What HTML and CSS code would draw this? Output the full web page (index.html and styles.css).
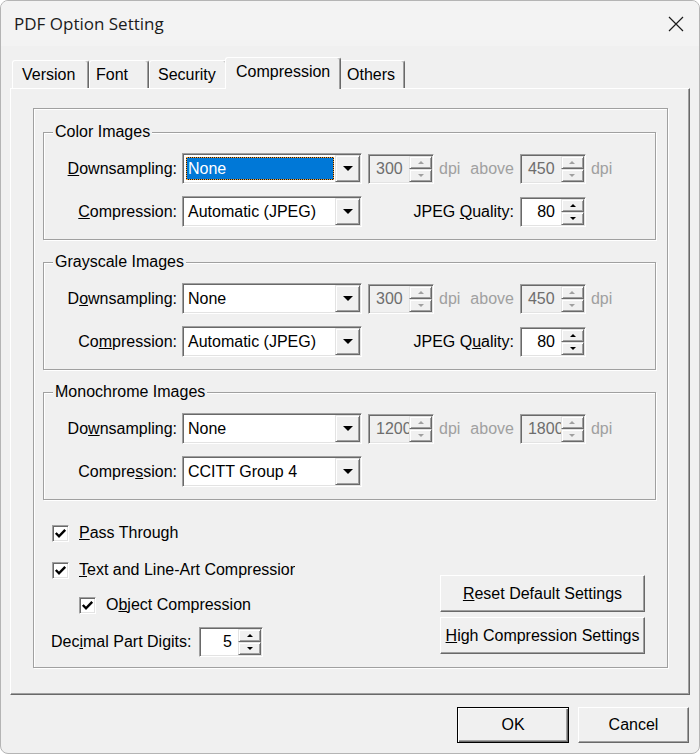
FILE: index.html
```html
<!DOCTYPE html>
<html>
<head>
	<meta charset="UTF-8">
	<title>PDF Option Setting</title>
	<link rel="stylesheet" href="styles.css">
</head>
<body>

	<div class="window">

		<div class="titlebar">
			<span class="title">PDF Option Setting</span>
			<svg class="close" width="16" height="16" viewBox="0 0 16 16">
				<path d="M1 1 L15 15 M15 1 L1 15" stroke="#1b1b1b" stroke-width="1.2" fill="none"/>
			</svg>
		</div>

		<div class="tabs">
			<div class="tab tab-version">Version</div>
			<div class="tab tab-font">Font</div>
			<div class="tab tab-security">Security</div>
			<div class="tab tab-compression active">Compression</div>
			<div class="tab tab-others">Others</div>
		</div>

		<div class="panel">
			<div class="frame">

				<fieldset class="group">
					<legend>Color Images</legend>
					<div class="row">
						<label class="lbl"><u>D</u>ownsampling:</label>
						<div class="combo sunken">
							<div class="combo-text"><span class="sel">None</span></div>
							<div class="drop"><i class="tri"></i></div>
						</div>
						<div class="spin sunken off res">
							<span class="spin-val">300</span>
							<span class="spin-btns"><span class="spin-btn"><i class="up"></i></span><span class="spin-btn"><i class="down"></i></span></span>
						</div>
						<span class="dim dpi">dpi</span>
						<span class="dim above">above</span>
						<div class="spin sunken off">
							<span class="spin-val">450</span>
							<span class="spin-btns"><span class="spin-btn"><i class="up"></i></span><span class="spin-btn"><i class="down"></i></span></span>
						</div>
						<span class="dim dpi">dpi</span>
					</div>
					<div class="row">
						<label class="lbl"><u>C</u>ompression:</label>
						<div class="combo sunken">
							<div class="combo-text"><span class="val">Automatic (JPEG)</span></div>
							<div class="drop"><i class="tri"></i></div>
						</div>
						<label class="quality">JPEG <u>Q</u>uality:</label>
						<div class="spin sunken">
							<span class="spin-val">80</span>
							<span class="spin-btns"><span class="spin-btn"><i class="up"></i></span><span class="spin-btn"><i class="down"></i></span></span>
						</div>
					</div>
				</fieldset>

				<fieldset class="group">
					<legend>Grayscale Images</legend>
					<div class="row">
						<label class="lbl">D<u>o</u>wnsampling:</label>
						<div class="combo sunken">
							<div class="combo-text"><span class="val">None</span></div>
							<div class="drop"><i class="tri"></i></div>
						</div>
						<div class="spin sunken off res">
							<span class="spin-val">300</span>
							<span class="spin-btns"><span class="spin-btn"><i class="up"></i></span><span class="spin-btn"><i class="down"></i></span></span>
						</div>
						<span class="dim dpi">dpi</span>
						<span class="dim above">above</span>
						<div class="spin sunken off">
							<span class="spin-val">450</span>
							<span class="spin-btns"><span class="spin-btn"><i class="up"></i></span><span class="spin-btn"><i class="down"></i></span></span>
						</div>
						<span class="dim dpi">dpi</span>
					</div>
					<div class="row">
						<label class="lbl">Co<u>m</u>pression:</label>
						<div class="combo sunken">
							<div class="combo-text"><span class="val">Automatic (JPEG)</span></div>
							<div class="drop"><i class="tri"></i></div>
						</div>
						<label class="quality">JPEG Q<u>u</u>ality:</label>
						<div class="spin sunken">
							<span class="spin-val">80</span>
							<span class="spin-btns"><span class="spin-btn"><i class="up"></i></span><span class="spin-btn"><i class="down"></i></span></span>
						</div>
					</div>
				</fieldset>

				<fieldset class="group">
					<legend>Monochrome Images</legend>
					<div class="row">
						<label class="lbl">Do<u>w</u>nsampling:</label>
						<div class="combo sunken">
							<div class="combo-text"><span class="val">None</span></div>
							<div class="drop"><i class="tri"></i></div>
						</div>
						<div class="spin sunken off res">
							<span class="spin-val">1200</span>
							<span class="spin-btns"><span class="spin-btn"><i class="up"></i></span><span class="spin-btn"><i class="down"></i></span></span>
						</div>
						<span class="dim dpi">dpi</span>
						<span class="dim above">above</span>
						<div class="spin sunken off">
							<span class="spin-val">1800</span>
							<span class="spin-btns"><span class="spin-btn"><i class="up"></i></span><span class="spin-btn"><i class="down"></i></span></span>
						</div>
						<span class="dim dpi">dpi</span>
					</div>
					<div class="row">
						<label class="lbl">Compre<u>s</u>sion:</label>
						<div class="combo sunken">
							<div class="combo-text"><span class="val">CCITT Group 4</span></div>
							<div class="drop"><i class="tri"></i></div>
						</div>
					</div>
				</fieldset>

				<div class="options">
					<div class="checks">
						<label class="check">
							<span class="box sunken"><svg width="13" height="13" viewBox="0 0 13 13"><path d="M1.8 6 L5 9.3 L11.2 2.8" stroke="#000" stroke-width="2.4" fill="none"/></svg></span>
							<span><u>P</u>ass Through</span>
						</label>
						<label class="check line-art">
							<span class="box sunken"><svg width="13" height="13" viewBox="0 0 13 13"><path d="M1.8 6 L5 9.3 L11.2 2.8" stroke="#000" stroke-width="2.4" fill="none"/></svg></span>
							<span class="clip"><u>T</u>ext and Line-Art Compression</span>
						</label>
						<label class="check sub">
							<span class="box sunken"><svg width="13" height="13" viewBox="0 0 13 13"><path d="M1.8 6 L5 9.3 L11.2 2.8" stroke="#000" stroke-width="2.4" fill="none"/></svg></span>
							<span>O<u>b</u>ject Compression</span>
						</label>
						<div class="digits">
							<label class="digits-lbl">Dec<u>i</u>mal Part Digits:</label>
							<div class="spin sunken">
								<span class="spin-val">5</span>
								<span class="spin-btns"><span class="spin-btn"><i class="up"></i></span><span class="spin-btn"><i class="down"></i></span></span>
							</div>
						</div>
					</div>

					<div class="actions">
						<button class="btn wide"><u>R</u>eset Default Settings</button>
						<button class="btn wide"><u>H</u>igh Compression Settings</button>
					</div>
				</div>

			</div>
		</div>

		<div class="footer">
			<button class="btn dlg default">OK</button>
			<button class="btn dlg">Cancel</button>
		</div>

	</div>

</body>
</html>
```

FILE: styles.css
```css
html {
	font-family: "Liberation Sans", Arial, sans-serif;
	font-size: 16px;
}

body {
	margin: 0;
	background: #fff;
	color: #000;
}

.window {
	width: 700px;
	height: 754px;
	box-sizing: border-box;
	border: 1px solid #b4b4b4;
	border-radius: 8px;
	background: #f0f0f0;
	overflow: hidden;
}

/* title bar */

.titlebar {
	height: 45px;
	display: flex;
	align-items: center;
	justify-content: space-between;
	padding: 0 15px 0 13px;
	background: #f3f3f3;
}

.title {
	font-family: "Open Sans", sans-serif;
	font-size: 17px;
	color: #1b1b1b;
}

/* tab strip */

.tabs {
	display: flex;
	align-items: flex-end;
	height: 31px;
	margin: 11px 0 0 11px;
}

.tab {
	box-sizing: border-box;
	flex: none;
	height: 28px;
	display: flex;
	align-items: center;
	border: 1px solid #fff;
	border-right-color: #696969;
	border-bottom: 0;
	border-radius: 3px 3px 0 0;
	box-shadow: inset -1px 0 0 #a0a0a0;
	background: #f0f0f0;
}

.tab-version { width: 77px; padding-left: 9px; }
.tab-font { width: 60px; padding-left: 6px; }
.tab-security { width: 78px; padding-left: 8px; }
.tab-compression { width: 116px; padding-left: 10px; }
.tab-others { width: 66px; padding-left: 7px; }

.tab.active {
	height: 32px;
	margin: 0 -2px -1px;
	padding-bottom: 3px;
	position: relative;
	z-index: 1;
}

.panel {
	box-sizing: border-box;
	width: 680px;
	height: 607px;
	margin-left: 9px;
	border: 1px solid #fff;
	border-right-color: #696969;
	border-bottom-color: #696969;
	box-shadow: inset -1px -1px 0 #a0a0a0;
}

/* etched frames */

.frame {
	box-sizing: border-box;
	width: 635px;
	margin: 19px 0 0 22px;
	padding: 14px 11px 10px 9px;
	border: 1px solid #a0a0a0;
	box-shadow: inset 1px 1px 0 #fff, 1px 1px 0 #fff;
}

.group {
	margin: 0;
	padding: 12px 0;
	min-width: 0;
	border: 1px solid #a0a0a0;
	box-shadow: inset 1px 1px 0 #fff, 1px 1px 0 #fff;
}

.group + .group {
	margin-top: 13px;
}

.group legend {
	margin-left: 9px;
	padding: 0 2px;
	line-height: 18px;
	background: #f0f0f0;
}

.row {
	display: flex;
	align-items: center;
	height: 31px;
}

.row + .row {
	margin-top: 12px;
}

.lbl {
	width: 133px;
	margin-right: 5px;
	text-align: right;
	flex: none;
}

.quality {
	width: 152px;
	margin-right: 6px;
	text-align: right;
	flex: none;
}

.dim {
	color: #a0a0a0;
}

.dpi {
	margin-left: 5px;
}

.above {
	margin: 0 6px 0 10px;
}

/* 3D borders */

.sunken {
	box-sizing: border-box;
	border: 1px solid;
	border-color: #a0a0a0 #fff #fff #a0a0a0;
	box-shadow: inset 1px 1px 0 #696969, inset -1px -1px 0 #e3e3e3;
	background: #fff;
}

.combo {
	width: 180px;
	height: 31px;
	padding: 1px;
	display: flex;
	flex: none;
}

.combo-text {
	flex: 1;
	display: flex;
	align-items: center;
	padding: 2px 1px 2px 2px;
}

.combo-text .val {
	padding-left: 2px;
}

.combo-text .sel {
	flex: 1;
	align-self: stretch;
	display: flex;
	align-items: center;
	padding-left: 1px;
	color: #fff;
	border: 1px dotted #f2a33a;
	background: linear-gradient(#0078d7, #0078d7) padding-box, linear-gradient(#1a1a1a, #1a1a1a) border-box;
}

.drop {
	box-sizing: border-box;
	width: 25px;
	display: flex;
	align-items: center;
	justify-content: center;
	border: 1px solid;
	border-color: #e3e3e3 #696969 #696969 #e3e3e3;
	box-shadow: inset 1px 1px 0 #fff, inset -1px -1px 0 #a0a0a0;
	background: #f0f0f0;
}

.tri {
	width: 0;
	height: 0;
	border-left: 5px solid transparent;
	border-right: 5px solid transparent;
	border-top: 5px solid #000;
}

/* up-down boxes */

.spin {
	width: 66px;
	height: 30px;
	padding: 1px;
	display: flex;
	flex: none;
}

.spin.res {
	margin-left: 6px;
}

.spin-val {
	flex: 1;
	display: flex;
	align-items: center;
	justify-content: flex-end;
	padding-right: 6px;
	overflow: hidden;
	white-space: nowrap;
}

.spin-btns {
	width: 23px;
	display: flex;
	flex-direction: column;
}

.spin-btn {
	flex: 1;
	box-sizing: border-box;
	display: flex;
	align-items: center;
	justify-content: center;
	border: 1px solid;
	border-color: #e3e3e3 #696969 #696969 #e3e3e3;
	box-shadow: inset 1px 1px 0 #fff, inset -1px -1px 0 #a0a0a0;
	background: #f0f0f0;
}

.up,
.down {
	width: 0;
	height: 0;
	border-left: 3px solid transparent;
	border-right: 3px solid transparent;
}

.up {
	border-bottom: 3px solid #000;
}

.down {
	border-top: 3px solid #000;
}

.spin.off {
	background: #f0f0f0;
	color: #6d6d6d;
}

.spin.off .spin-val {
	justify-content: flex-start;
	padding: 0 0 0 6px;
}

.spin.off .up {
	border-bottom-color: #a0a0a0;
}

.spin.off .down {
	border-top-color: #a0a0a0;
}

/* lower options */

.options {
	display: flex;
	justify-content: space-between;
	align-items: flex-end;
	margin-top: 23px;
}

.checks {
	display: flex;
	flex-direction: column;
	margin-left: 9px;
}

.check {
	display: flex;
	align-items: center;
	height: 20px;
	gap: 10px;
}

.check + .check {
	margin-top: 17px;
}

.check.sub {
	margin-top: 15px;
	margin-left: 27px;
}

.box {
	width: 17px;
	height: 17px;
	display: flex;
	align-items: center;
	justify-content: center;
}

.clip {
	width: 216px;
	overflow: hidden;
	white-space: nowrap;
}

.digits {
	display: flex;
	align-items: center;
	margin: 12px 0 0 -1px;
}

.digits-lbl {
	width: 148px;
}

.digits .spin {
	width: 64px;
}

.actions {
	display: flex;
	flex-direction: column;
	gap: 5px;
	margin: 0 11px 3px 0;
}

/* push buttons */

.btn {
	box-sizing: border-box;
	font: inherit;
	color: #000;
	padding: 0;
	border: 1px solid;
	border-color: #fff #696969 #696969 #fff;
	box-shadow: inset -1px -1px 0 #a0a0a0;
	background: #f0f0f0;
}

.btn.wide {
	width: 205px;
	height: 37px;
}

.footer {
	display: flex;
	justify-content: flex-end;
	gap: 9px;
	padding: 12px 10px 0 0;
}

.btn.dlg {
	width: 111px;
	height: 36px;
}

.btn.default {
	width: 112px;
	border: 1px solid #000;
	box-shadow: inset 1px 1px 0 #fff, inset -1px -1px 0 #696969, inset -2px -2px 0 #a0a0a0;
}
```
